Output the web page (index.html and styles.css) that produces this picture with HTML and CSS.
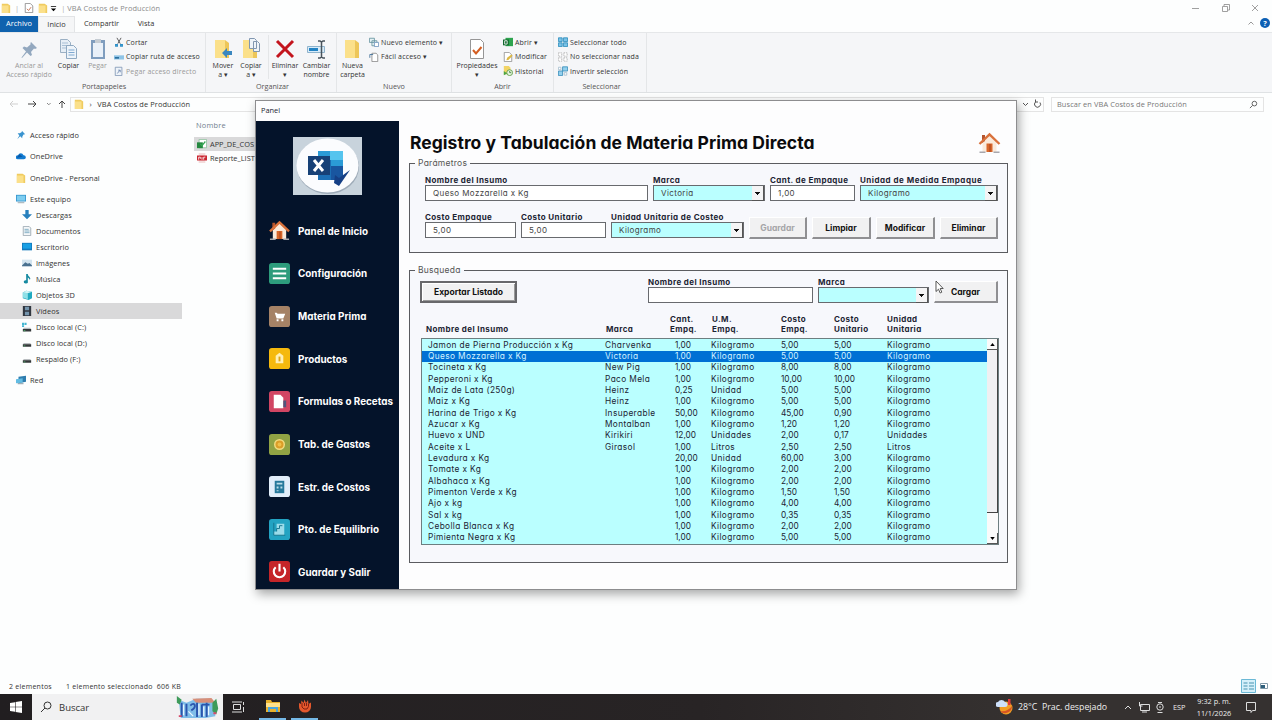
FILE: index.html
```html
<!doctype html>
<html lang="es">
<head>
  <title>VBA Costos de Producción</title>
  <meta charset="utf-8" />
  <meta name="viewport" content="width=device-width,initial-scale=1" />

  <link rel="stylesheet" href="styles.css">
</head>
<body>
  <svg class="defs">
    <symbol id="folder" viewBox="0 0 12 12">
      <path fill="#f0cb5f" d="M1 1h7l3 2v9H1z" />
      <path fill="#fbe08a" d="M1 3h8v9H1z" />
    </symbol>
    <symbol id="house" viewBox="0 0 22 22">
      <path fill="#fbeadb" d="M4 10l7-7 7 7v10H4z" />
      <path fill="#b5542d" d="M3.500 3h3v6l-3 2z" />
      <path fill="none" stroke="#d9713b" stroke-width="2.400" d="M1 12L11 2.500 21 12" />
      <path fill="#d8672b" d="M8 11.500h6V20H8z" />
      <path fill="#a9431c" d="M11 12h1v8h-1z" />
      <path fill="#a8a7ad" d="M1 19.500h6v1.500H1zM15 19.500h6v1.500h-6z" />
    </symbol>
    <symbol id="disk" viewBox="0 0 12 12">
      <path fill="#b9bdc0" d="M2 6h8l1 2H1z" />
      <path fill="#34383a" d="M1 7.500h10v3H1z" />
      <path fill="#4cb36a" d="M2 9h2v1H2z" />
    </symbol>
    <symbol id="copy" viewBox="0 0 20 22">
      <path fill="#e6eef6" stroke="#9bb0c4" d="M1.500 1.500h7l3 3v10h-10z" />
      <path stroke="#a8bfd5" d="M3 5h6M3 7.500h6M3 10h6" />
      <path fill="#eef4fa" stroke="#8fa9c2" d="M7.500 7.500h7l3 3v10h-10z" />
      <path stroke="#7fa8d0" d="M9.500 12h6M9.500 14.500h6M9.500 17h6" />
    </symbol>
    <symbol id="bigfolder" viewBox="0 0 20 22">
      <path fill="#edc659" d="M2 2h10l4 3v15H2z" />
      <path fill="#fbe08a" d="M2 2h10v18H2z" />
    </symbol>
  </svg>

  <div class="explorer">
    <div class="titlebar">
      <svg class="ico"><use href="#folder" /></svg>
      <i>|</i>
      <svg class="ico" viewBox="0 0 12 12"><path fill="#fff" stroke="#878787" d="M1.500.500h6l3 3v8h-9z" /><path fill="none" stroke="#c0603b" d="M3.500 7l2 2 3-4" /></svg>
      <svg class="ico"><use href="#folder" /></svg>
      <svg class="caret" viewBox="0 0 8 8"><path d="M1 1h6v1H1zM1 4h6L4 7z" /></svg>
      <i>|</i>
      <span>VBA Costos de Producción</span>
      <svg class="win-buttons" viewBox="0 0 70 12">
        <path d="M1 6.500h7M31.500 4.500h5v5h-5zM33 4V2.500h5.500V8H37M61 3l6 6M67 3l-6 6" />
      </svg>
    </div>

    <div class="tabs">
      <span class="tab file">Archivo</span>
      <span class="tab active">Inicio</span>
      <span class="tab share">Compartir</span>
      <span class="tab view">Vista</span>
      <svg class="up" viewBox="0 0 8 6"><path d="M1.500 4.500L4 2l2.500 2.500" /></svg>
      <b class="help">?</b>
    </div>

    <div class="ribbon">
      <div class="group g1">
        <div class="tools">
          <div class="big w50 off">
            <svg viewBox="0 0 20 22"><path fill="#93a8bf" d="M12 4l6 6-2 1-1-.500-3 3.500 1 3-1.500 1-3.500-3.500L3 20l-.500-.500L7 13.500 3.500 10 5 8.500l3 1 3.500-3V5z" /></svg>
            Anclar al<br>Acceso rápido
          </div>
          <div class="big w28"><svg><use href="#copy" /></svg>Copiar</div>
          <div class="big w30 off">
            <svg viewBox="0 0 20 22"><path fill="#7f9dbe" d="M3 2h14v19H3z" /><path fill="#e9f0f8" d="M5 5h10v14H5z" /><path fill="#c5ccd3" d="M7 1h6v4H7z" /></svg>
            Pegar
          </div>
          <ul class="small">
            <li><svg class="ico" viewBox="0 0 12 12"><path fill="none" stroke="#444" d="M3.500 1l4 7M8.500 1l-4 7" /><path fill="none" stroke="#2b8fc8" stroke-width="1.500" d="M2 9h2v2H2zM8 9h2v2H8z" /></svg>Cortar</li>
            <li><svg class="ico" viewBox="0 0 12 12"><path fill="#8fc4e6" d="M0 4h12v5H0z" /><path fill="#2b6f9e" d="M1 6h5v2H1z" /></svg>Copiar ruta de acceso</li>
            <li class="off"><svg class="ico" viewBox="0 0 12 12"><path fill="#eef3f9" stroke="#7f95b5" d="M1.500 1.500h8v10h-8z" /><path fill="none" stroke="#6b86ad" d="M4 9l3-4M5 5h2.500v2.500" /></svg>Pegar acceso directo</li>
          </ul>
        </div>
        <div class="name">Portapapeles</div>
      </div>
      <div class="group g2">
        <div class="tools">
          <div class="big w29"><svg viewBox="0 0 20 22"><use href="#bigfolder" width="20" height="22" /><path fill="#3a87bf" d="M9 15l5-5v3h5v4h-5v3z" /></svg>Mover<br>a ▾</div>
          <div class="big w29"><svg viewBox="0 0 20 22"><use href="#bigfolder" width="20" height="22" /><path fill="#eef4fa" stroke="#8197b0" d="M8.500.500h5l2 2v8h-7zM12.500 3.500h4l2 2v8h-6z" /></svg>Copiar<br>a ▾</div>
          <div class="big w34 line"><svg viewBox="0 0 20 22"><path fill="none" stroke="#c3141d" stroke-width="3" d="M2 3l16 16M18 3L2 19" /></svg>Eliminar<br>▾</div>
          <div class="big w30"><svg viewBox="0 0 20 22"><path fill="#d8ecfa" stroke="#8fb3cc" d="M.500 8.500h17v6H.500z" /><path fill="#2383c4" d="M2 10h9v3H2z" /><path fill="none" stroke="#48535c" stroke-width="1.500" d="M11 3h2l1.500 1L16 3h2M14.500 4v15M11 20h2l1.500-1 1.500 1h2" /></svg>Cambiar<br>nombre</div>
        </div>
        <div class="name">Organizar</div>
      </div>
      <div class="group g3">
        <div class="tools">
          <div class="big w30"><svg><use href="#bigfolder" /></svg>Nueva<br>carpeta</div>
          <ul class="small">
            <li><svg class="ico" viewBox="0 0 12 12"><path fill="#e4f1f4" stroke="#64929d" d="M.500 1.500h6v5h-6zM3.500 4.500h6v6h-6z" /><path fill="#fff" stroke="#6e93bd" d="M6.500 6.500h5v5h-5z" /></svg>Nuevo elemento ▾</li>
            <li><svg class="ico" viewBox="0 0 12 12"><path fill="#fff" stroke="#878787" d="M3.500 1.500h5l2 2v8h-7z" /><path fill="none" stroke="#3b6c95" d="M1 7V3h4" /></svg>Fácil acceso ▾</li>
          </ul>
        </div>
        <div class="name">Nuevo</div>
      </div>
      <div class="group g4">
        <div class="tools">
          <div class="big w48"><svg viewBox="0 0 20 22"><path fill="#fff" stroke="#969696" d="M3.500 1.500h10l3 3v16h-13z" /><path fill="none" stroke="#d45e22" stroke-width="2" d="M6 12l3 3.500L14.500 9" /></svg>Propiedades<br>▾</div>
          <ul class="small">
            <li><svg class="ico" viewBox="0 0 12 12"><path fill="#2da44e" d="M3 1h9v10H3z" /><path fill="#12682f" d="M0 3h7v7H0z" /><path fill="none" stroke="#fff" d="M2 4.500h3v4H2z" /></svg>Abrir ▾</li>
            <li><svg class="ico" viewBox="0 0 12 12"><path fill="#fff" stroke="#909090" d="M1.500.500h6l3 3v8h-9z" /><path fill="#dcb843" d="M4 10l1-3 5-4 1.500 1.500-5 5z" /></svg>Modificar</li>
            <li><svg class="ico" viewBox="0 0 12 12"><path fill="#f2d466" d="M1 0h6l2 2v8H1z" /><circle cx="8" cy="8" r="3.500" fill="#e7f4df" stroke="#55983f" /><path fill="none" stroke="#398032" d="M8 6v2h2" /><path fill="#4ca646" d="M1 6l4 3-4 2z" /></svg>Historial</li>
          </ul>
        </div>
        <div class="name">Abrir</div>
      </div>
      <div class="group g5">
        <div class="tools">
          <ul class="small">
            <li><svg class="ico" viewBox="0 0 12 12"><path fill="#79c2e7" stroke="#298cba" d="M.500 1h4.500v4.500H.500zM6.500 1h5v4.500h-5zM.500 7h4.500v4.500H.500zM6.500 7h5v4.500h-5z" /></svg>Seleccionar todo</li>
            <li><svg class="ico" viewBox="0 0 12 12"><path fill="#fff" stroke="#aaa" stroke-dasharray="1.500 1" d="M.500 1h4v4h-4zM7 1h4v4H7zM.500 7h4v4h-4zM7 7h4v4H7z" /></svg>No seleccionar nada</li>
            <li><svg class="ico" viewBox="0 0 12 12"><path fill="#93d0ee" stroke="#398ebb" d="M5.500 1h6v5h-6zM.500 6h5v5.500h-5z" /><path fill="#fff" stroke="#a2bccc" d="M.500 1.500h3v3h-3zM7.500 8h3v3h-3z" /></svg>Invertir selección</li>
          </ul>
        </div>
        <div class="name">Seleccionar</div>
      </div>
    </div>

    <div class="address">
      <svg class="nav" viewBox="0 0 60 10">
        <path stroke="#cfcfcf" d="M10 5H2M5 2L2 5l3 3" />
        <path stroke="#444" d="M20 5h8M25 2l3 3-3 3" />
        <path stroke="#888" d="M39 4l1.800 1.800L42.600 4" />
        <path stroke="#444" d="M54 9V2M51 5l3-3 3 3" />
      </svg>
      <div class="path">
        <svg class="ico"><use href="#folder" /></svg>
        <span>›</span>
        <span>VBA Costos de Producción</span>
        <svg class="refresh" viewBox="0 0 22 12">
          <path d="M2 5l2.500 2.500L7 5M19 4.500a3 3 0 1 1-4.500-.500M14.500 1.500V4H17" />
        </svg>
      </div>
      <div class="search">
        Buscar en VBA Costos de Producción
        <svg viewBox="0 0 10 10"><circle cx="6" cy="4" r="2.600" /><path d="M4 6L1 9" /></svg>
      </div>
    </div>

    <div class="files">
      <ul class="tree">
        <li class="root"><svg class="ico" viewBox="0 0 12 12"><path fill="#3993cf" d="M7 1l4 4-2 .500L7.500 8v2L5 7.500 1.500 11 4 6.500 2 4h2.500L7 2.500z" /></svg>Acceso rápido</li>
        <li class="root"><svg class="ico" viewBox="0 0 12 12"><path fill="#127bd1" d="M2 10a2.500 2.500 0 0 1 .500-5A3.500 3.500 0 0 1 9 5a2.500 2.500 0 0 1 .500 5z" /><path fill="#0b59a6" d="M1 8l3-4 4 3z" /></svg>OneDrive</li>
        <li class="root"><svg class="ico"><use href="#folder" /></svg>OneDrive - Personal</li>
        <li class="root pc"><svg class="ico" viewBox="0 0 12 12"><path fill="#3595cd" d="M0 1h12v8H0z" /><path fill="#7dcdf0" d="M1 2h10v6H1z" /><path fill="#8c9ba5" d="M2 10h8v1H2z" /></svg>Este equipo</li>
        <li><svg class="ico" viewBox="0 0 12 12"><path fill="#2880bd" d="M4 0h4v5h4l-6 6-6-6h4z" /></svg>Descargas</li>
        <li><svg class="ico" viewBox="0 0 12 12"><path fill="#f4f7f9" stroke="#96a5ae" d="M1.500.500h7l2 2v9h-9z" /><path stroke="#71a4bd" d="M3 4h5M3 6h6M3 8h6" /></svg>Documentos</li>
        <li><svg class="ico" viewBox="0 0 12 12"><path fill="#1379bc" d="M0 1h12v9H0z" /><path fill="#19a0e4" d="M1 2h10v6H1z" /></svg>Escritorio</li>
        <li><svg class="ico" viewBox="0 0 12 12"><path fill="#d3e4ef" d="M0 2h12v8H0z" /><path fill="#49708f" d="M0 9l4-4 3 2 2-1 3 3v1H0z" /></svg>Imágenes</li>
        <li><svg class="ico" viewBox="0 0 12 12"><path fill="#168aa1" d="M5 0h2c0 3 3 3 3 6L9 7c0-2-2-2-2-3v5a2.500 2 0 1 1-2-1.500z" /></svg>Música</li>
        <li><svg class="ico" viewBox="0 0 12 12"><path fill="#21aac0" d="M1 3l4-2 7 1v8l-4 2-7-2z" /><path fill="#8fe0e7" d="M1 3l6 1v7L1 9z" /><path fill="#d2f4f5" d="M1 3l4-2 7 1-5 2z" /></svg>Objetos 3D</li>
        <li class="selected"><svg class="ico" viewBox="0 0 12 12"><path fill="#30363f" d="M1 0h10v12H1z" /><path fill="#7494ac" d="M3.500 1h5v4h-5zM3.500 7h5v4h-5z" /></svg>Vídeos</li>
        <li><svg class="ico" viewBox="0 0 12 12"><use href="#disk" y="1" width="12" height="12" /><path fill="#45b6d1" d="M0 1h2.500v2.500H0zM3 1h2.500v2.500H3zM0 4h2.500v2H0z" /></svg>Disco local (C:)</li>
        <li><svg class="ico"><use href="#disk" /></svg>Disco local (D:)</li>
        <li><svg class="ico"><use href="#disk" /></svg>Respaldo (F:)</li>
        <li class="root net"><svg class="ico" viewBox="0 0 12 12"><path fill="#2f7dae" d="M3 2l9-1v7l-9 2z" /><path fill="#62bce3" d="M0 5l8-1v5l-8 1z" /><path fill="#6c8796" d="M2 10h7v1H2z" /></svg>Red</li>
      </ul>
      <div class="listing">
        <div class="col-name">Nombre</div>
        <div class="file-row selected"><svg class="ico" viewBox="0 0 12 12"><path fill="#fff" stroke="#8bbf9b" d="M2.500.500h9v10h-9z" /><path fill="#24883f" d="M0 4h7v7H0z" /><path fill="none" stroke="#34a853" stroke-width="1.500" d="M4 6l2 2 4-5" /></svg>APP_DE_COS</div>
        <div class="file-row"><svg class="ico" viewBox="0 0 12 12"><path fill="#f3dcdc" d="M2 0h8v12H2z" /><path fill="#ca2631" d="M0 3h12v6H0z" /><path fill="none" stroke="#fff" d="M2 8V5h2v2M6 5v3M8 8V5h2" /></svg>Reporte_LIST</div>
      </div>
    </div>

    <div class="status">
      <span>2 elementos</span>
      <span>1 elemento seleccionado&nbsp; 606 KB</span>
      <svg viewBox="0 0 30 14"><path fill="#d5f0fa" stroke="#6bb9d6" d="M1.500.500h14v13h-14z" /><path stroke="#4993b0" d="M3.500 4h4M9 4h5M3.500 7h4M9 7h5M3.500 10h4M9 10h5" /><path fill="#fff" stroke="#8199a8" d="M20.500 4.500h7v5h-7z" /><path fill="#2f607c" d="M21 6h4v3h-4z" /></svg>
    </div>
  </div>

  <div class="panel">
    <div class="panel-title">Panel</div>
    <div class="panel-body">
      <nav>
        <svg class="logo" viewBox="0 0 69 58">
          <rect width="69" height="58" fill="#c8d3dc" />
          <ellipse cx="35" cy="30" rx="31" ry="27" fill="#9eabb8" />
          <ellipse cx="34.500" cy="28.500" rx="31" ry="27" fill="#fbfcfe" />
          <path fill="#2b9bd6" d="M25 14h25v29H25z" />
          <path fill="#55c4ee" d="M37 14h13v9H37z" />
          <path fill="#1c6fb5" d="M25 23h13v20H25z" />
          <path fill="#1956a0" d="M38 29h12v14H38z" />
          <path fill="#174177" d="M15 19h22v19H15z" />
          <path fill="none" stroke="#fff" stroke-width="3" d="M21 23l9 11M30 23l-9 11" />
          <path fill="#153f85" d="M42 38l4 3 11-8-11 16-5-3z" />
        </svg>
        <ul>
          <li><svg><use href="#house" /></svg>Panel de Inicio</li>
          <li><svg viewBox="0 0 22 22"><rect width="22" height="22" rx="3" fill="#2d9c7c" /><path stroke="#fff" stroke-width="2.200" d="M4 6h14M4 11h14M4 16h14" /></svg>Configuración</li>
          <li><svg viewBox="0 0 22 22"><rect width="22" height="22" rx="3" fill="#a58266" /><path fill="#fff" d="M6 7h2l1 1h8l-2 5H8zM8 14h2v2H8zM13 14h2v2h-2z" /></svg>Materia Prima</li>
          <li><svg viewBox="0 0 22 22"><rect width="22" height="22" rx="3" fill="#f5b90d" /><path fill="#fff0b4" d="M7 8l4-3 4 3v8H7z" /><path fill="#dda619" d="M10 9h2v5h-2z" /></svg>Productos</li>
          <li><svg viewBox="0 0 22 22"><rect width="22" height="22" rx="3" fill="#d14563" /><path fill="#fff" d="M5 4h7l3 3v11H5z" /><path fill="#51557c" d="M15 10h3v7h-3z" /></svg>Formulas o Recetas</li>
          <li><svg viewBox="0 0 22 22"><rect width="22" height="22" rx="3" fill="#91a344" /><circle cx="11" cy="11" r="5" fill="#db9d28" stroke="#f3dc80" stroke-width="1.500" /><circle cx="11" cy="11" r="2" fill="#f0bf49" /></svg>Tab. de Gastos</li>
          <li><svg viewBox="0 0 22 22"><rect width="22" height="22" rx="3" fill="#e2eefa" /><path fill="#27799b" d="M6 5h10v13H6z" /><path fill="#badce8" d="M8 7h6v2H8zM8 11h2v2H8zM12 11h2v2h-2zM8 15h2v1H8z" /></svg>Estr. de Costos</li>
          <li><svg viewBox="0 0 22 22"><rect width="22" height="22" rx="3" fill="#23a3c2" /><path fill="#9bdcea" d="M8 5h8v12H5v-4h3z" /><path fill="none" stroke="#17748e" d="M5 4v13h12M8 13v-3h3V7h3" /></svg>Pto. de Equilibrio</li>
          <li><svg viewBox="0 0 22 22"><rect width="22" height="22" rx="3" fill="#c52529" /><path fill="none" stroke="#fff" stroke-width="2.200" d="M7 6.500a6 6 0 1 0 8 0M11 3v8" /></svg>Guardar y Salir</li>
        </ul>
      </nav>

      <main>
        <header>
          <h1>Registro y Tabulación de Materia Prima Directa</h1>
          <svg><use href="#house" /></svg>
        </header>

        <fieldset class="params">
          <legend>Parámetros</legend>
          <div class="row row1">
            <label>Nombre del Insumo<span class="field">Queso Mozzarella x Kg</span></label>
            <label>Marca<span class="field combo">Victoria</span></label>
            <label>Cant. de Empaque<span class="field">1,00</span></label>
            <label class="wide">Unidad de Medida Empaque<span class="field combo">Kilogramo</span></label>
          </div>
          <div class="row row2">
            <label>Costo Empaque<span class="field">5,00</span></label>
            <label>Costo Unitario<span class="field">5,00</span></label>
            <label>Unidad Unitaria de Costeo<span class="field combo">Kilogramo</span></label>
            <button disabled>Guardar</button>
            <button>Limpiar</button>
            <button>Modificar</button>
            <button>Eliminar</button>
          </div>
        </fieldset>

        <fieldset class="find">
          <legend>Busqueda</legend>
          <div class="row row3">
            <button class="focused">Exportar Listado</button>
            <label>Nombre del Insumo<span class="field"></span></label>
            <label>Marca<span class="field combo"></span></label>
            <button>Cargar</button>
            <svg class="pointer" viewBox="0 0 9 14"><path d="M1 1v10.500l2.500-2.300 1.700 3.800 1.600-.800L5.200 8.500h3z" /></svg>
          </div>

          <div class="cols head">
            <span>Nombre del Insumo</span><span>Marca</span><span>Cant.<br>Empq.</span><span>U.M.<br>Empq.</span><span>Costo<br>Empq.</span><span>Costo<br>Unitario</span><span>Unidad<br>Unitaria</span>
          </div>
          <div class="list">
            <div class="rows">
              <div class="cols"><span>Jamon de Pierna Producción x Kg</span><span>Charvenka</span><span>1,00</span><span>Kilogramo</span><span>5,00</span><span>5,00</span><span>Kilogramo</span></div>
              <div class="cols selected"><span>Queso Mozzarella x Kg</span><span>Victoria</span><span>1,00</span><span>Kilogramo</span><span>5,00</span><span>5,00</span><span>Kilogramo</span></div>
              <div class="cols"><span>Tocineta x Kg</span><span>New Pig</span><span>1,00</span><span>Kilogramo</span><span>8,00</span><span>8,00</span><span>Kilogramo</span></div>
              <div class="cols"><span>Pepperoni x Kg</span><span>Paco Mela</span><span>1,00</span><span>Kilogramo</span><span>10,00</span><span>10,00</span><span>Kilogramo</span></div>
              <div class="cols"><span>Maiz de Lata (250g)</span><span>Heinz</span><span>0,25</span><span>Unidad</span><span>5,00</span><span>5,00</span><span>Kilogramo</span></div>
              <div class="cols"><span>Maiz x Kg</span><span>Heinz</span><span>1,00</span><span>Kilogramo</span><span>5,00</span><span>5,00</span><span>Kilogramo</span></div>
              <div class="cols"><span>Harina de Trigo x Kg</span><span>Insuperable</span><span>50,00</span><span>Kilogramo</span><span>45,00</span><span>0,90</span><span>Kilogramo</span></div>
              <div class="cols"><span>Azucar x Kg</span><span>Montalban</span><span>1,00</span><span>Kilogramo</span><span>1,20</span><span>1,20</span><span>Kilogramo</span></div>
              <div class="cols"><span>Huevo x UND</span><span>Kirikiri</span><span>12,00</span><span>Unidades</span><span>2,00</span><span>0,17</span><span>Unidades</span></div>
              <div class="cols"><span>Aceite x L</span><span>Girasol</span><span>1,00</span><span>Litros</span><span>2,50</span><span>2,50</span><span>Litros</span></div>
              <div class="cols"><span>Levadura x Kg</span><span></span><span>20,00</span><span>Unidad</span><span>60,00</span><span>3,00</span><span>Kilogramo</span></div>
              <div class="cols"><span>Tomate x Kg</span><span></span><span>1,00</span><span>Kilogramo</span><span>2,00</span><span>2,00</span><span>Kilogramo</span></div>
              <div class="cols"><span>Albahaca x Kg</span><span></span><span>1,00</span><span>Kilogramo</span><span>2,00</span><span>2,00</span><span>Kilogramo</span></div>
              <div class="cols"><span>Pimenton Verde x Kg</span><span></span><span>1,00</span><span>Kilogramo</span><span>1,50</span><span>1,50</span><span>Kilogramo</span></div>
              <div class="cols"><span>Ajo x kg</span><span></span><span>1,00</span><span>Kilogramo</span><span>4,00</span><span>4,00</span><span>Kilogramo</span></div>
              <div class="cols"><span>Sal x kg</span><span></span><span>1,00</span><span>Kilogramo</span><span>0,35</span><span>0,35</span><span>Kilogramo</span></div>
              <div class="cols"><span>Cebolla Blanca x Kg</span><span></span><span>1,00</span><span>Kilogramo</span><span>2,00</span><span>2,00</span><span>Kilogramo</span></div>
              <div class="cols"><span>Pimienta Negra x Kg</span><span></span><span>1,00</span><span>Kilogramo</span><span>5,00</span><span>5,00</span><span>Kilogramo</span></div>
            </div>
            <div class="scrollbar">
              <div class="arrow"><svg viewBox="0 0 6 4"><path d="M0 4h6L3 0z" /></svg></div>
              <div class="thumb"></div>
              <div class="arrow down"><svg viewBox="0 0 6 4"><path d="M0 0h6L3 4z" /></svg></div>
            </div>
          </div>
        </fieldset>
      </main>
    </div>
  </div>

  <div class="taskbar">
    <div class="start"><svg viewBox="0 0 12 12"><path fill="#fff" d="M0 2l5-.800v4.500H0zM5.600 1L12 0v5.700H5.600zM0 6.300h5v4.500L0 10zM5.600 6.300H12V12l-6.400-1z" /></svg></div>
    <div class="finder">
      <svg class="lens" viewBox="0 0 12 12"><circle cx="7.500" cy="4.500" r="3.500" /><path d="M5 7L1 11" /></svg>
      Buscar
      <svg class="art" viewBox="0 0 44 26">
        <path fill="#7fbde8" d="M2 5l8 3 10-4h15l5 5v13l-10 2H4z" />
        <path fill="#d78f79" d="M16 4l20-1 4 5H20z" />
        <path fill="#3e9b5b" d="M0 1l5 4-2 5-3-2zM37 8l4-4 2 10-2 6-4-3z" />
        <path fill="none" stroke="#2a55ad" stroke-width="2" d="M5 8v15M10 9v13M14 11c5-5 7 2 1 5M21 8v15M26 10v13M31 8v15M26 10h8" />
        <path fill="none" stroke="#e9f6ff" stroke-width="1.300" d="M7 10v11M12 17l5 5M23 9v12M28 12v10M33 12v9" />
        <path fill="#d64b6a" d="M2 21h3v2H2zM38 18h3v2h-3z" />
      </svg>
    </div>
    <div class="task"><svg viewBox="0 0 14 14"><path fill="none" stroke="#ddd" d="M2.500 4.500h7v5h-7zM1 2h10M1 12h10M12.500 2v3M12.500 7v5" /></svg></div>
    <div class="task open files-app"><svg viewBox="0 0 16 14"><path fill="#e7b12d" d="M1 1h5l1 2h8v10H1z" /><path fill="#ffe28a" d="M1 4h14v4H1z" /><path fill="#4aa6dd" d="M3 8h10v5h-2v-3H5v3H3z" /></svg></div>
    <div class="task open"><svg viewBox="0 0 14 14"><path fill="#e4572c" d="M1 4l2 1 .500-3.500L5.500 4l1-3.500L8 4l2-3 .500 4L13 3.500v4.500a6 5.500 0 0 1-12 0z" /><path fill="none" stroke="#7e2113" d="M4 4v4l2 2h3l1.500-2.500V5M6.500 4v3M8.500 4v3" /></svg></div>
    <div class="tray">
      <svg class="weather" viewBox="0 0 18 16"><circle cx="10" cy="9" r="6.500" fill="#f29e24" /><path fill="#d65424" d="M4 12a7 7 0 0 0 12-5c-3 4-7 6-12 5z" /><path fill="#cfe1fa" d="M2 8a2.500 2.500 0 0 1 0-5 4 4 0 0 1 7 0 2.500 2.500 0 0 1 0 5z" /><path fill="#e33a3a" d="M12 0h2.500v6H12z" /></svg>
      <span class="temp">28°C&nbsp; Prac. despejado</span>
      <svg class="sys" viewBox="0 0 44 12"><path d="M2 8l3-3 3 3M17.500 3.500h9v6h-9zM19 11h5M16.500 1v4h3" /><circle cx="37" cy="6" r="3.200" /><path d="M37 5v2M35 1.500h4M34.500 11.500h5" /></svg>
      <span class="lang">ESP</span>
      <span class="clock">9:32 p. m.<br>11/1/2026</span>
      <svg class="note" viewBox="0 0 12 12"><path d="M1.500 1.500h9v8h-3l-1.500 2v-2H1.500z" /></svg>
    </div>
  </div>
</body>
</html>
```
FILE: styles.css
```css
* {
  box-sizing: border-box;
}

body {
  font-family: "Open Sans", "Noto Sans", sans-serif;
  font-size: 7.4px;
  color: #333;
  background: #fdfefe;
  margin: 0;
  width: 1272px;
  height: 720px;
  overflow: hidden;
  position: relative;
}

ul {
  list-style: none;
  margin: 0;
  padding: 0;
}

.defs {
  display: none;
}

.ico {
  width: 10px;
  height: 10px;
  flex: none;
}

/* explorer */

.explorer {
  display: flex;
  flex-direction: column;
  height: 694px;
}

.titlebar {
  display: flex;
  align-items: center;
  height: 16px;
  padding: 0 11px 0 1px;
  color: #8b8b8b;
  letter-spacing: 0.1px;
}

.titlebar .ico {
  margin-right: 4px;
}

.titlebar i {
  font-style: normal;
  margin-right: 5px;
  color: #aaa;
}

.titlebar .ico + .ico {
  margin: 0 2px 0 0;
}

.titlebar .caret {
  width: 7px;
  height: 7px;
  margin-right: 4px;
}

.titlebar i + span {
  margin-left: -3px;
}

.win-buttons {
  width: 70px;
  height: 12px;
  margin-left: auto;
  fill: none;
  stroke: #888;
  stroke-width: 0.8;
}

.tabs {
  display: flex;
  height: 16px;
  line-height: 15px;
  align-items: stretch;
}

.tab {
  text-align: center;
}

.file {
  width: 38px;
  background: #0f62ae;
  color: #fff;
}

.active {
  width: 37px;
  background: #f5f6f7;
  border: 1px solid #e2e4e6;
  border-bottom: 0;
  line-height: 14px;
}

.share {
  width: 53px;
}

.view {
  width: 36px;
}

.up {
  width: 8px;
  height: 6px;
  margin: 4px 5px 0 auto;
  fill: none;
  stroke: #999;
}

.help {
  width: 10px;
  height: 10px;
  margin: 2px 2px 0 0;
  border-radius: 50%;
  background: #0c5fb4;
  color: #fff;
  line-height: 10px;
  text-align: center;
}

.ribbon {
  display: flex;
  height: 61px;
  background: #f5f6f8;
  border-top: 1px solid #e5e7e9;
  border-bottom: 1px solid #dfe2e4;
}

.group {
  border-right: 1px solid #e4e6e8;
  display: flex;
  flex-direction: column;
  justify-content: space-between;
  padding: 2px 0 0 3px;
}

.g1 { width: 206px; }
.g2 { width: 131px; }
.g3 { width: 115px; padding-left: 0; }
.g4 { width: 102px; padding-left: 0; }
.g5 { width: 93px; }

.tools {
  display: flex;
}

.big {
  text-align: center;
  line-height: 8.5px;
  font-size: 7px;
  white-space: nowrap;
}

.big svg {
  display: block;
  width: 20px;
  height: 22px;
  margin: 3px auto 2px;
}

.w50 { width: 52px; }
.w28 { width: 27px; }
.w29 { width: 28px; }
.w30 { width: 31px; }
.w34 { width: 33px; margin-left: 3px; }
.w48 { width: 50px; }

.line {
  border-left: 1px solid #e4e6e8;
}

.off {
  color: #999;
}

.small {
  font-size: 7px;
  letter-spacing: 0.15px;
  padding-left: 1px;
}

.small li {
  display: flex;
  align-items: center;
  gap: 2px;
  height: 14.5px;
  white-space: nowrap;
}

.name {
  text-align: center;
  line-height: 11px;
  font-size: 7.2px;
  color: #555;
}

.address {
  display: flex;
  align-items: center;
  height: 22px;
  padding-right: 8px;
}

.nav {
  width: 60px;
  height: 10px;
  margin: 0 2px 0 8px;
  fill: none;
}

.path,
.search {
  display: flex;
  align-items: center;
  height: 15px;
  border: 1px solid #e4e4e4;
}

.path {
  width: 974px;
  padding-left: 3px;
  gap: 5.5px;
  letter-spacing: 0.1px;
}

.refresh {
  width: 22px;
  height: 12px;
  margin-left: auto;
}

.refresh,
.search svg {
  fill: none;
  stroke: #555;
}

.search {
  flex: 1;
  margin-left: 7px;
  padding: 0 5px;
  justify-content: space-between;
  color: #777;
  letter-spacing: 0.1px;
}

.search svg {
  width: 9px;
  height: 9px;
}

.files {
  display: flex;
  flex: 1;
}

.tree {
  width: 182px;
  padding-top: 9.4px;
  letter-spacing: 0.05px;
}

.tree li {
  display: flex;
  align-items: center;
  gap: 4px;
  height: 16px;
  padding-left: 22px;
}

.tree .root {
  height: 21.3px;
  padding-left: 16px;
}

.tree .pc {
  height: 16px;
  margin-top: 2.9px;
}

.tree .net {
  height: 26px;
}

.tree .selected,
.file-row.selected {
  background: #d9d9da;
}

.listing {
  width: 75px;
  margin-left: 12px;
  white-space: nowrap;
}

.col-name {
  padding: 5px 2px 0;
  height: 22px;
  line-height: 10px;
  color: #71808f;
  letter-spacing: 0.2px;
}

.file-row {
  display: flex;
  align-items: center;
  gap: 3px;
  height: 14px;
  padding-left: 3px;
}

.status {
  display: flex;
  align-items: center;
  gap: 14px;
  height: 16px;
  padding: 0 2px 0 9px;
  font-size: 7px;
  letter-spacing: 0.25px;
}

.status svg {
  width: 30px;
  height: 14px;
  margin-left: auto;
}

/* form window */

.panel {
  position: absolute;
  left: 255px;
  top: 100px;
  width: 762px;
  height: 490px;
  border: 1px solid #8d8d8f;
  background: #fdfdfe;
  box-shadow: 2px 4px 10px rgba(0, 0, 0, 0.35);
  color: #1c2433;
  font-family: Inter, sans-serif;
  font-feature-settings: "cv11";
}

.panel-title {
  height: 20px;
  line-height: 19px;
  padding-left: 5px;
  font-family: "Open Sans", sans-serif;
}

.panel-body {
  display: flex;
  height: 468px;
}

nav {
  width: 143px;
  flex: none;
  background: #04132a;
  color: #fff;
  font-size: 9.85px;
  font-weight: bold;
}

.logo {
  display: block;
  width: 69px;
  height: 58px;
  margin: 16px 0 14.5px 37px;
}

nav li {
  display: flex;
  align-items: center;
  gap: 8px;
  height: 42.65px;
  padding-left: 13px;
  white-space: nowrap;
}

nav li svg {
  width: 21px;
  height: 21px;
}

main {
  flex: 1;
  padding: 9px 8px 0 10px;
}

header {
  display: flex;
  align-items: center;
  justify-content: space-between;
  height: 27px;
  padding: 0 7px 2px 1px;
}

header svg {
  width: 23px;
  height: 22px;
}

h1 {
  margin: 0;
  font-size: 17.5px;
  line-height: 24px;
  letter-spacing: 0.03px;
  color: #0b0b0d;
  white-space: nowrap;
}

fieldset {
  width: 599px;
  margin: 0;
  padding: 0 8px 0 11px;
  border: 1px solid #5b5c60;
  background: #f7f8fc;
  min-width: 0;
}

legend {
  height: 12px;
  line-height: 12px;
  padding: 0 3px;
  margin-left: -6px;
  font-size: 8.5px;
  letter-spacing: 0.25px;
  color: #555;
}

.params {
  height: 96px;
}

.find {
  height: 299px;
  margin-top: 11px;
}

.row {
  display: grid;
  column-gap: 5px;
  align-items: end;
  font-weight: bold;
}

.row1 {
  grid-template-columns: 223px 112px 85px 138px;
  padding: 6px 0 0 4px;
}

.row2 {
  grid-template-columns: 91px 85px 133px 58px 59px 59px 58px;
  padding: 11px 0 0 4px;
}

.row2 button {
  margin-bottom: -1px;
}

.row3 {
  grid-template-columns: 222px 165px 111px 64px;
  padding: 1px 0 0;
  position: relative;
}

.row3 .focused {
  width: 97px;
  margin-left: -1px;
}

label {
  display: block;
  font-size: 8px;
  line-height: 10px;
  letter-spacing: 0.4px;
  white-space: nowrap;
}

.wide {
  letter-spacing: 0.5px;
}

.field {
  display: block;
  height: 16px;
  padding-left: 7px;
  border: 1px solid #686a6e;
  background: #fff;
  font-weight: normal;
  line-height: 14px;
  letter-spacing: 0.4px;
  color: #444;
}

.combo {
  position: relative;
  background: #baffff;
}

.combo::after {
  content: "";
  position: absolute;
  right: 0;
  top: 0;
  width: 11px;
  height: 14px;
  border-right: 1px solid #555;
  border-bottom: 1px solid #555;
  background:
    linear-gradient(#111, #111) 3px 6px / 5px 1px no-repeat,
    linear-gradient(#111, #111) 4px 7px / 3px 1px no-repeat,
    linear-gradient(#111, #111) 5px 8px / 1px 1px no-repeat,
    #f4f4f5;
}

button {
  height: 22px;
  padding: 0;
  border: solid;
  border-color: #fff #8f8f92 #8f8f92 #fff;
  border-width: 1px 2px 2px 1px;
  background: #f1f1f2;
  color: #111;
  font: bold 8.5px Inter, sans-serif;
  font-feature-settings: "cv11";
}

button:disabled {
  color: #a5a5a8;
}

button.focused {
  border: 2px solid #68686b;
  box-shadow: inset 1px 1px #fff, inset -1px -1px #999;
}

.pointer {
  position: absolute;
  left: 514px;
  top: 4px;
  width: 9px;
  height: 14px;
  fill: #fff;
  stroke: #333;
  stroke-width: 0.8;
}

.cols {
  display: grid;
  grid-template-columns: 177px 70px 36px 70px 53px 53px 100px;
  padding-left: 6px;
  white-space: nowrap;
}

.head {
  grid-template-columns: 180px 64px 42px 69px 53px 53px 100px;
  align-items: end;
  height: 35px;
  padding-left: 5px;
  padding-bottom: 3px;
  font-size: 8px;
  font-weight: bold;
  line-height: 10.7px;
  letter-spacing: 0.4px;
}

.list {
  display: flex;
  height: 207px;
  border: 1px solid #6d7e80;
  background: #baffff;
}

.rows {
  flex: 1;
  font-size: 8.3px;
  line-height: 11.33px;
  letter-spacing: 0.38px;
  padding-top: 0.8px;
}

.rows .cols {
  height: 11.33px;
}

.rows .cols span:nth-child(3),
.rows .cols span:nth-child(5),
.rows .cols span:nth-child(6) {
  letter-spacing: 0;
}

.rows .selected {
  background: #0070d4;
  color: #d5f3ff;
}

.scrollbar {
  width: 11px;
  display: flex;
  flex-direction: column;
  background: #fafafa;
}

.arrow {
  display: flex;
  align-items: center;
  justify-content: center;
  height: 11px;
  border-right: 1px solid #555;
  border-bottom: 1px solid #555;
}

.arrow svg {
  width: 5px;
  height: 3px;
}

.thumb {
  height: 163px;
  border: solid #444;
  border-width: 0 1px 1px 0;
  background: #f0f0f2;
}

.down {
  margin-top: auto;
}

/* taskbar */

.taskbar {
  display: flex;
  height: 26px;
  background: linear-gradient(90deg, #211e20, #282425 55%, #353130 80%);
  color: #eee;
}

.start {
  width: 32px;
  padding: 7px 10px;
}

.start svg {
  width: 12px;
  height: 12px;
}

.finder {
  display: flex;
  align-items: center;
  width: 191px;
  padding-left: 8px;
  gap: 7px;
  background: #f1f1f2;
  color: #333;
  font-size: 9.5px;
}

.lens {
  width: 12px;
  height: 12px;
  fill: none;
  stroke: #333;
}

.art {
  width: 44px;
  height: 25px;
  margin: 0 3px 0 auto;
}

.task {
  display: flex;
  align-items: center;
  justify-content: center;
  width: 30px;
  margin-right: 6px;
}

.task svg {
  width: 14px;
  height: 14px;
}

.task.open {
  width: 27px;
  margin-right: 5px;
  border-bottom: 2px solid #75b9e7;
}

.task.files-app svg {
  width: 16px;
}

.tray {
  display: flex;
  align-items: center;
  margin-left: auto;
  padding-right: 15px;
  font-size: 8.8px;
}

.weather {
  width: 18px;
  height: 16px;
  margin-right: 4px;
}

.temp {
  width: 105px;
}

.sys {
  width: 44px;
  height: 12px;
  margin-right: 6px;
}

.sys,
.note {
  fill: none;
  stroke: #ddd;
}

.lang {
  font-size: 7.3px;
  width: 19px;
}

.clock {
  width: 44px;
  font-size: 7.3px;
  line-height: 12px;
  text-align: center;
}

.note {
  width: 12px;
  height: 12px;
  margin-left: 9px;
}
```
